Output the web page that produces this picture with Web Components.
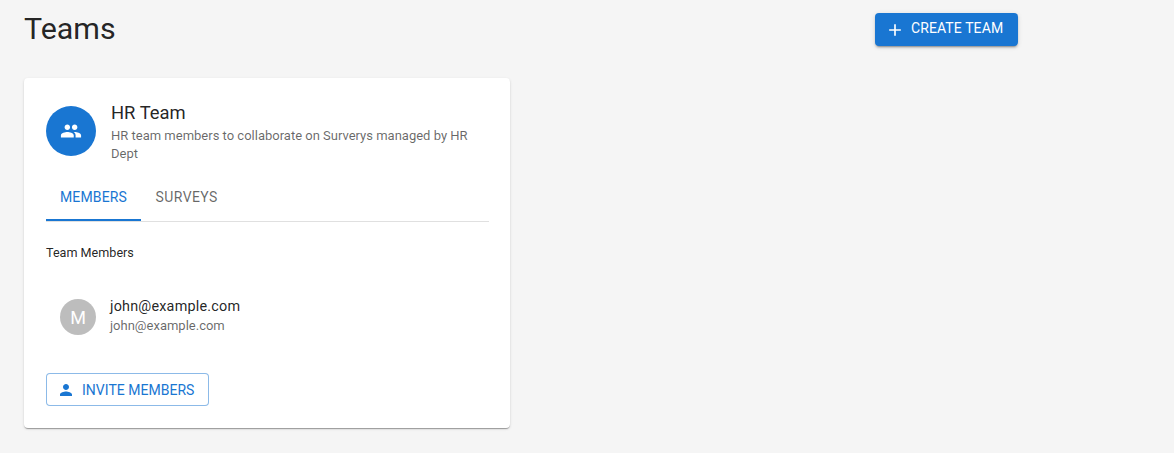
<!DOCTYPE html>
<html>
<head>
<meta charset="utf-8">
<title>Teams</title>
<style>
  html, body { margin: 0; padding: 0; background: #f5f5f5; }
  body { font-family: Roboto, "Liberation Sans", sans-serif; color: rgba(0,0,0,0.87); }
</style>
</head>
<body>
<teams-page></teams-page>

<script>
const ICONS = {
  plus: 'M19 13h-6v6h-2v-6H5v-2h6V5h2v6h6v2z',
  peopleFilled: 'M16 11c1.66 0 2.99-1.34 2.99-3S17.66 5 16 5c-1.66 0-3 1.34-3 3s1.34 3 3 3zm-8 0c1.66 0 2.99-1.34 2.99-3S9.66 5 8 5C6.34 5 5 6.34 5 8s1.34 3 3 3zm0 2c-2.33 0-7 1.17-7 3.5V19h14v-2.5c0-2.33-4.67-3.5-7-3.5zm8 0c-.29 0-.62.02-.97.05 1.16.84 1.97 1.97 1.97 3.45V19h6v-2.5c0-2.33-4.67-3.5-7-3.5z',
  person: 'M12 12c2.21 0 4-1.79 4-4s-1.79-4-4-4-4 1.79-4 4 1.79 4 4 4zm0 2c-2.67 0-8 1.34-8 4v2h16v-2c0-2.66-5.33-4-8-4z'
};

class MuiIcon extends HTMLElement {
  connectedCallback() {
    const size = this.getAttribute('size') || 20;
    const name = this.getAttribute('name');
    this.attachShadow({ mode: 'open' });
    this.shadowRoot.innerHTML = `
      <style>
        :host { display: inline-flex; flex: none; }
        svg { display: block; fill: currentColor; }
      </style>
      <svg width="${size}" height="${size}" viewBox="0 0 24 24"><path d="${ICONS[name]}"></path></svg>
    `;
  }
}

class MuiButton extends HTMLElement {
  connectedCallback() {
    this.attachShadow({ mode: 'open' });
    this.shadowRoot.innerHTML = `
      <style>
        :host {
          display: inline-flex;
          align-items: center;
          box-sizing: border-box;
          height: 33px;
          border-radius: 4px;
          font-size: 14px;
          font-weight: 400;
          letter-spacing: 0.02px;
          text-transform: uppercase;
          white-space: nowrap;
        }
        :host([variant="contained"]) {
          background: #1976d2;
          color: #fff;
          padding: 0 15px 0 10px;
          gap: 6px;
          letter-spacing: 0.1px;
          box-shadow: 0 3px 1px -2px rgba(0,0,0,.2), 0 2px 2px 0 rgba(0,0,0,.14), 0 1px 5px 0 rgba(0,0,0,.12);
        }
        :host([variant="contained"]) .label { margin-top: -4px; }
        :host([variant="outlined"]) {
          color: #1976d2;
          background: #fff;
          border: 1px solid rgba(25,118,210,.5);
          padding: 0 14px 0 10px;
          gap: 7px;
        }
      </style>
      <slot name="icon"></slot><span class="label"><slot></slot></span>
    `;
  }
}

class TeamTabs extends HTMLElement {
  connectedCallback() {
    this.attachShadow({ mode: 'open' });
    this.shadowRoot.innerHTML = `
      <style>
        :host {
          display: flex;
          height: 49px;
          box-sizing: border-box;
          border-bottom: 1px solid #e0e0e0;
          font-size: 14px;
          letter-spacing: 0.15px;
          text-transform: uppercase;
        }
        .tab {
          display: flex;
          align-items: center;
          box-sizing: border-box;
          height: 48px;
          padding: 0 14px;
          color: rgba(0,0,0,.6);
        }
        .tab + .tab { letter-spacing: 0.4px; padding-left: 14.5px; }
        .active {
          color: #1976d2;
          box-shadow: inset 0 -2px 0 #1976d2;
        }
      </style>
      <div class="tab active">Members</div>
      <div class="tab">Surveys</div>
    `;
  }
}

class MemberRow extends HTMLElement {
  connectedCallback() {
    const email = this.getAttribute('email');
    this.attachShadow({ mode: 'open' });
    this.shadowRoot.innerHTML = `
      <style>
        :host { display: flex; align-items: center; gap: 14px; padding: 0 14px; }
        .avatar {
          width: 36px; height: 36px; flex: none;
          border-radius: 50%;
          background: #bdbdbd;
          color: #fff;
          font-size: 18px;
          display: flex; align-items: center; justify-content: center;
        }
        .text { padding-bottom: 2px; }
        .name { font-size: 14.4px; line-height: 20px; letter-spacing: 0.2px; color: rgba(0,0,0,.87); }
        .mail { font-size: 13px; line-height: 18px; color: rgba(0,0,0,.6); }
      </style>
      <div class="avatar">M</div>
      <div class="text">
        <div class="name">${email}</div>
        <div class="mail">${email}</div>
      </div>
    `;
  }
}

class TeamCard extends HTMLElement {
  connectedCallback() {
    this.attachShadow({ mode: 'open' });
    this.shadowRoot.innerHTML = `
      <style>
        :host {
          display: block;
          box-sizing: border-box;
          width: 486px;
          height: 350px;
          padding: 22px 21px 0 22px;
          background: #fff;
          border-radius: 4px;
          box-shadow: 0 2px 1px -1px rgba(0,0,0,.2), 0 1px 1px 0 rgba(0,0,0,.14), 0 1px 3px 0 rgba(0,0,0,.12);
        }
        .head { display: flex; gap: 15px; align-items: center; height: 62px; }
        .logo {
          width: 50px; height: 50px; flex: none;
          border-radius: 50%;
          background: #1976d2;
          color: #fff;
          display: flex; align-items: center; justify-content: center;
        }
        .title { font-size: 18.4px; line-height: 26px; color: rgba(0,0,0,.87); }
        .desc { font-size: 13px; line-height: 18px; padding-top: 1px; color: rgba(0,0,0,.6); }
        team-tabs { margin-top: 11px; }
        .label { font-size: 12.6px; line-height: 18px; margin-top: 22px; color: rgba(0,0,0,.87); }
        member-row { margin-top: 35px; }
        .actions { margin-top: 36px; }
      </style>
      <div class="head">
        <div class="logo"><mui-icon name="peopleFilled" size="22"></mui-icon></div>
        <div>
          <div class="title">HR Team</div>
          <div class="desc">HR team members to collaborate on Surverys managed by HR Dept</div>
        </div>
      </div>
      <team-tabs></team-tabs>
      <div class="label">Team Members</div>
      <member-row email="john@example.com"></member-row>
      <div class="actions">
        <mui-button variant="outlined"><mui-icon slot="icon" name="person" size="18"></mui-icon>Invite Members</mui-button>
      </div>
    `;
  }
}

class TeamsPage extends HTMLElement {
  connectedCallback() {
    this.attachShadow({ mode: 'open' });
    this.shadowRoot.innerHTML = `
      <style>
        :host { display: block; box-sizing: border-box; height: 453px; padding: 0 24px; overflow: hidden; }
        header { display: flex; height: 78px; align-items: flex-start; }
        h1 { margin: 8px 0 0; width: 851px; flex: none; font-size: 30.4px; line-height: 42px; font-weight: 400; color: rgba(0,0,0,.87); }
        mui-button { margin-top: 13px; }
      </style>
      <header>
        <h1>Teams</h1>
        <mui-button variant="contained"><mui-icon slot="icon" name="plus" size="20"></mui-icon>Create Team</mui-button>
      </header>
      <team-card></team-card>
    `;
  }
}

customElements.define('mui-icon', MuiIcon);
customElements.define('mui-button', MuiButton);
customElements.define('team-tabs', TeamTabs);
customElements.define('member-row', MemberRow);
customElements.define('team-card', TeamCard);
customElements.define('teams-page', TeamsPage);
</script>
</body>
</html>
